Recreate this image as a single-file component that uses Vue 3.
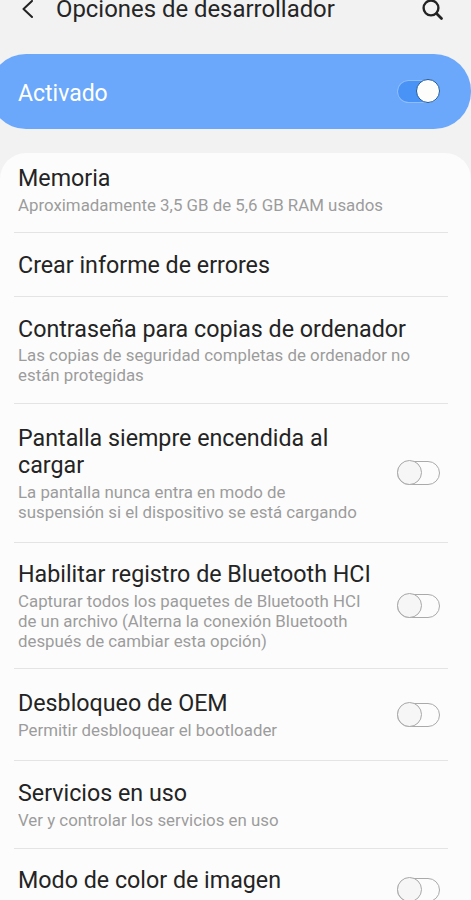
<script setup>
const rows = [
  { title: ['Memoria'], sub: ['Aproximadamente 3,5 GB de 5,6 GB RAM usados'], h: 80, cls: 'first' },
  { title: ['Crear informe de errores'], sub: [], h: 64, cls: 'plain' },
  { title: ['Contraseña para copias de ordenador'], sub: ['Las copias de seguridad completas de ordenador no', 'están protegidas'], h: 107 },
  { title: ['Pantalla siempre encendida al', 'cargar'], sub: ['La pantalla nunca entra en modo de', 'suspensión si el dispositivo se está cargando'], h: 139, toggle: true },
  { title: ['Habilitar registro de Bluetooth HCI'], sub: ['Capturar todos los paquetes de Bluetooth HCI', 'de un archivo (Alterna la conexión Bluetooth', 'después de cambiar esta opción)'], h: 126, toggle: true },
  { title: ['Desbloqueo de OEM'], sub: ['Permitir desbloquear el bootloader'], h: 92, toggle: true },
  { title: ['Servicios en uso'], sub: ['Ver y controlar los servicios en uso'], h: 88 },
  { title: ['Modo de color de imagen'], sub: [], h: 64, toggle: true }
]
</script>

<template>
  <div class="screen">
    <header class="bar">
      <svg class="back" width="14" height="20" viewBox="0 0 14 20" fill="none">
        <path d="M12 2 L3.5 10 L12 18" stroke="#222" stroke-width="2" stroke-linecap="round" stroke-linejoin="round" />
      </svg>
      <h1 class="heading">Opciones de desarrollador</h1>
      <svg class="search" width="24" height="24" viewBox="0 0 24 24" fill="none">
        <circle cx="11" cy="10" r="7.4" stroke="#222" stroke-width="2.4" />
        <path d="M16.5 15.5 L21.5 20.5" stroke="#222" stroke-width="2.8" stroke-linecap="round" />
      </svg>
    </header>

    <section class="banner">
      <span class="banner-label">Activado</span>
      <span class="switch-on"><span class="knob-on"></span></span>
    </section>

    <section class="card">
      <div v-for="(r, i) in rows" :key="i" class="row" :class="r.cls" :style="{ height: r.h + 'px' }">
        <div class="texts">
          <div class="title"><div v-for="t in r.title" :key="t">{{ t }}</div></div>
          <div v-if="r.sub.length" class="sub"><div v-for="s in r.sub" :key="s">{{ s }}</div></div>
        </div>
        <span v-if="r.toggle" class="switch-off"><span class="knob-off"></span></span>
      </div>
    </section>
  </div>
</template>

<style>
html, body { margin: 0; background: #f2f2f3; }
</style>

<style scoped>
.screen {
  width: 471px;
  height: 900px;
  overflow: hidden;
  background: #f2f2f3;
  font-family: Roboto, "Liberation Sans", sans-serif;
}
.bar {
  display: flex;
  align-items: center;
  height: 40px;
  margin-top: -11px;
  padding: 0 27px 0 20px;
  box-sizing: border-box;
}
.back { flex: none; }
.heading {
  margin: 0 0 0 22px;
  flex: 1;
  font-size: 23.9px;
  font-weight: 400;
  color: #252525;
}
.search { flex: none; margin-top: 1px; }
.banner {
  display: flex;
  align-items: center;
  justify-content: space-between;
  height: 75px;
  margin: 25px 0 0 -11px;
  padding: 0 31px 0 29px;
  border-radius: 37px;
  background: #6ba8fb;
}
.banner-label { padding-top: 3px; font-size: 23px; color: #fff; }
.switch-on {
  position: relative;
  display: block;
  width: 43px;
  height: 23px;
  border-radius: 12px;
  background: #4a93f6;
  box-shadow: inset 0 0 0 1px #8dbdfb;
}
.knob-on {
  position: absolute;
  right: 0;
  top: -1px;
  width: 22px;
  height: 22px;
  border-radius: 50%;
  background: #fdfdfb;
  border: 1.5px solid #1c5a9c;
}
.card {
  margin-top: 24px;
  height: 760px;
  padding: 0 23px 0 14px;
  border-radius: 26px 26px 0 0;
  background: #fcfcfc;
}
.row {
  display: flex;
  align-items: center;
  justify-content: space-between;
  box-sizing: border-box;
  border-bottom: 1px solid #e4e4e4;
  padding: 0 8px 0 4px;
}
.row.first { align-items: flex-start; padding-top: 11px; }
.row.plain { padding-top: 1px; }
.row:last-child { border-bottom: 0; align-items: flex-start; padding-top: 17px; }
.row:last-child .switch-off { margin-top: 12px; }
.title { padding-top: 1px; font-size: 23.25px; line-height: 27px; color: #242424; }
.sub { margin-top: 2.5px; font-size: 16.85px; line-height: 20px; color: #9c9c9c; }
.switch-off {
  position: relative;
  flex: none;
  display: block;
  width: 41px;
  height: 22px;
  border: 1.5px solid #aaa;
  border-radius: 12px;
  background: #fcfcfc;
}
.knob-off {
  position: absolute;
  left: -1.5px;
  top: -2px;
  width: 23px;
  height: 23px;
  box-sizing: content-box;
  border-radius: 50%;
  border: 1.5px solid #a8a8a8;
  background: #f6f6f6;
}
</style>
